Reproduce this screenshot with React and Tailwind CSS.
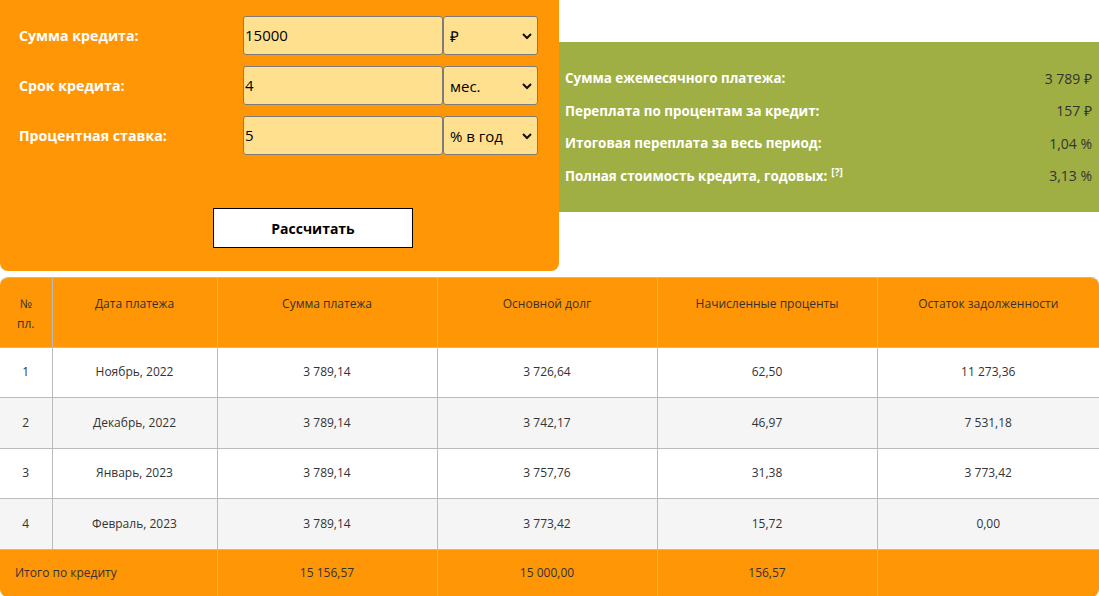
import React from "react";

const fields = [
  { label: "Сумма кредита:", value: "15000", unit: "₽" },
  { label: "Срок кредита:", value: "4", unit: "мес." },
  { label: "Процентная ставка:", value: "5", unit: "% в год" },
];

const results = [
  { label: "Сумма ежемесячного платежа:", value: "3 789 ₽" },
  { label: "Переплата по процентам за кредит:", value: "157 ₽" },
  { label: "Итоговая переплата за весь период:", value: "1,04 %" },
  { label: "Полная стоимость кредита, годовых:", value: "3,13 %", note: true },
];

const rows = [
  ["1", "Ноябрь, 2022", "3 789,14", "3 726,64", "62,50", "11 273,36"],
  ["2", "Декабрь, 2022", "3 789,14", "3 742,17", "46,97", "7 531,18"],
  ["3", "Январь, 2023", "3 789,14", "3 757,76", "31,38", "3 773,42"],
  ["4", "Февраль, 2023", "3 789,14", "3 773,42", "15,72", "0,00"],
];

function Chevron() {
  return (
    <svg width="10" height="7" viewBox="0 0 10 7" className="absolute right-[5px] top-1/2 -translate-y-1/2">
      <path d="M1 1.5 L5 5.5 L9 1.5" fill="none" stroke="#111" strokeWidth="2" />
    </svg>
  );
}

export default function App() {
  return (
    <div className="w-[1099px] h-[596px] overflow-hidden bg-white text-[#333] font-['Open_Sans',sans-serif]">
      <div className="flex">
        <div className="w-[559px] h-[271px] bg-[#ff9605] rounded-b-lg pt-4 relative">
          {fields.map((f) => (
            <div key={f.label} className="flex items-center h-[39px] mb-[11px]">
              <div className="w-[243px] pl-[19px] text-[14.2px] font-bold text-white">{f.label}</div>
              <div className="w-[200px] h-[39px] bg-[#ffe08f] border border-[#7c7c7c] rounded-[3px] flex items-center px-[1px] text-[15px] text-black">
                {f.value}
              </div>
              <div className="relative w-[95px] h-[39px] bg-[#ffe08f] border border-[#7c7c7c] rounded-[3px] flex items-center pl-[6px] pt-[2px] text-[15px] text-black">
                {f.unit}
                <Chevron />
              </div>
            </div>
          ))}
          <div className="mt-[53px] ml-[213px] w-[200px] h-[40px] bg-white border border-black flex items-center justify-center text-[14px] font-bold text-black">
            Рассчитать
          </div>
        </div>
        <div className="flex-1 mt-[42px] h-[170px] bg-[#9faf44] pt-[20px] pl-[6px] pr-[7px]">
          {results.map((r) => (
            <div key={r.label} className="flex justify-between items-center h-[32.5px] text-[13.4px]">
              <span className="font-bold text-white">
                {r.label}
                {r.note && <sup className="ml-1 text-[10px]">[?]</sup>}
              </span>
              <span className="text-[#333] text-[14px]">{r.value}</span>
            </div>
          ))}
        </div>
      </div>

      <div className="mt-[6px] rounded-lg overflow-hidden border-t border-[#bbb]">
        <table className="w-full border-collapse text-[12px] table-fixed">
          <colgroup>
            <col className="w-[52px]" />
            <col className="w-[165px]" />
            <col className="w-[220px]" />
            <col className="w-[220px]" />
            <col className="w-[220px]" />
            <col />
          </colgroup>
          <thead>
            <tr className="bg-[#ff9605] h-[69px]">
              {["№ пл.", "Дата платежа", "Сумма платежа", "Основной долг", "Начисленные проценты", "Остаток задолженности"].map((h, i) => (
                <th
                  key={h}
                  className={`font-normal align-top pt-[16px] leading-[20px] text-[#333] border-[#bbb] ${i > 0 ? "border-l" : ""} ${i === 0 ? "px-[14px]" : ""}`}
                >
                  {h}
                </th>
              ))}
            </tr>
          </thead>
          <tbody>
            {rows.map((row, ri) => (
              <tr key={ri} className={`h-[50.5px] border-t border-[#bbb] ${ri % 2 ? "bg-[#f5f5f5]" : "bg-white"}`}>
                {row.map((c, ci) => (
                  <td key={ci} className={`text-center border-[#bbb] ${ci > 0 ? "border-l" : ""}`}>
                    {c}
                  </td>
                ))}
              </tr>
            ))}
            <tr className="h-[48px] bg-[#ff9605] border-t border-[#bbb]">
              <td colSpan={2} className="pl-[15px] text-left">Итого по кредиту</td>
              <td className="text-center border-l border-[#bbb]">15 156,57</td>
              <td className="text-center border-l border-[#bbb]">15 000,00</td>
              <td className="text-center border-l border-[#bbb]">156,57</td>
              <td className="border-l border-[#bbb]"></td>
            </tr>
          </tbody>
        </table>
      </div>
    </div>
  );
}
